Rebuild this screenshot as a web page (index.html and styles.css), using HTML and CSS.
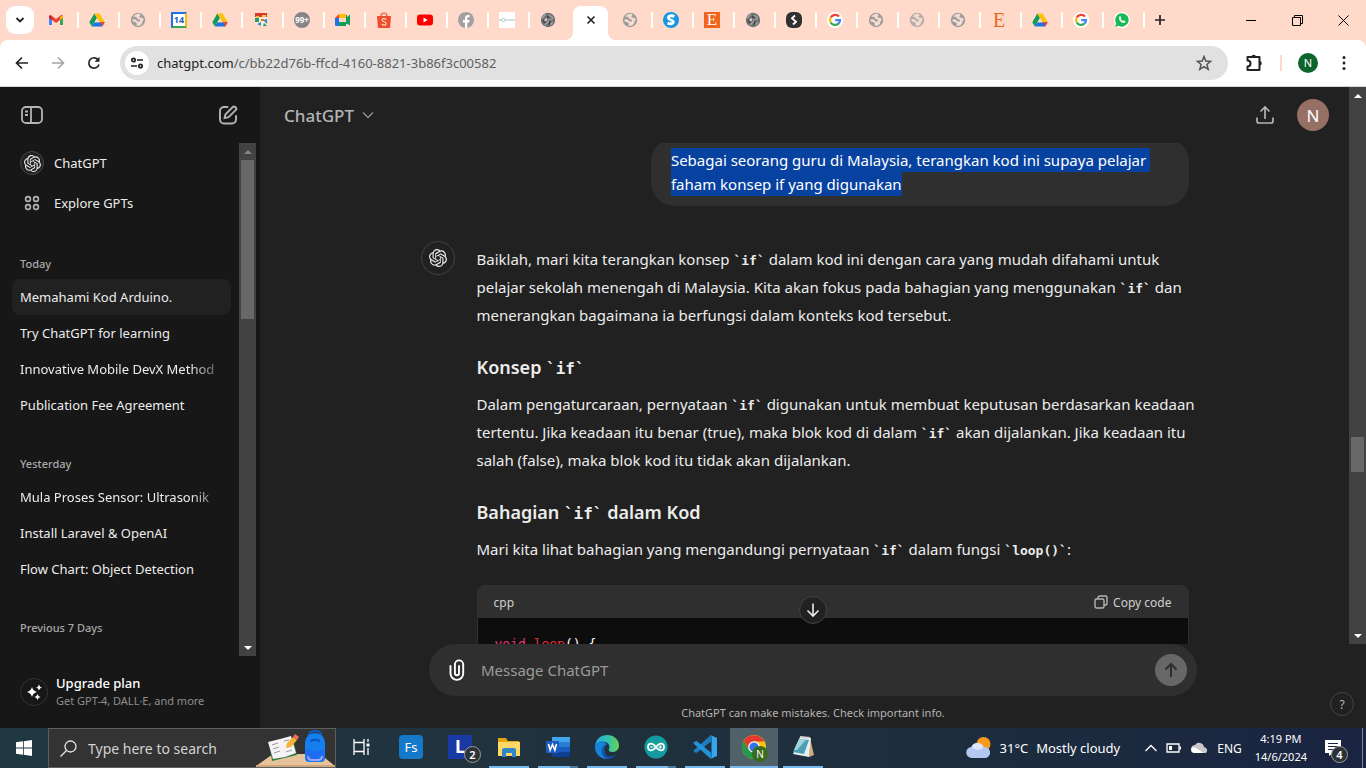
FILE: index.html
```html
<!DOCTYPE html>
<html lang="ms">
<head>
<meta charset="utf-8">
<title>Memahami Kod Arduino.</title>
<link rel="stylesheet" href="styles.css">
</head>
<body>
<svg class="defs" aria-hidden="true">
  <symbol id="drive" viewBox="0 0 16 16"><path fill="#0f9d58" d="M5.3 1.5 8 6 2.8 14.5.3 10.3z"/><path fill="#ffc107" d="M5.3 1.5h5.2l5.2 8.8h-5z"/><path fill="#1a73e8" d="M5.5 10.3h10.2l-2.5 4.2H2.8z"/><path fill="#ea4335" d="M10.7 10.3h5l-2.5 4.2z"/><path fill="#ffd9c9" d="m8 6.3 2.5 4H5.6z"/></symbol>
  <symbol id="globe" viewBox="0 0 16 16"><circle cx="8" cy="8" r="7.2" fill="#a09c9b"/><path fill="#f4dcd2" d="M9 1.500C6 1.800 4 3.500 3.500 5c2-.5 3 0 3.500 1.200S9.500 7 10 8.200c.3 1-.7 1.600-1.700 1.400C6.500 9.500 7 8 5.500 7.500 4 7 3 7.500 2 8c1 2.500 3.500 1.500 4.500 3 .6 1-.3 2 .5 3 3 0 5-1.500 5.300-3.700.2-1.800 1.500-1.500 1.200-3.300-.3-1.300-1.500-1.200-2.700-1.200-1.600 0-1.800-1.300-.8-1.800.9-.5.4-1.500-1-2.500z"/></symbol>
  <symbol id="google" viewBox="0 0 16 16"><circle cx="8" cy="8" r="8" fill="#fff"/><g fill="none" stroke-width="2.300"><path stroke="#ea4335" d="M12 4.600A5 5 0 0 0 3.700 5.500"/><path stroke="#fbbc05" d="M3.700 5.500a5 5 0 0 0 0 5"/><path stroke="#34a853" d="M3.700 10.500a5 5 0 0 0 7.600 1.200"/><path stroke="#4285f4" d="M11.300 11.700A5 5 0 0 0 13 8.200H8.200"/></g></symbol>
  <symbol id="photo" viewBox="0 0 16 16"><circle cx="8" cy="8" r="7.200" fill="#707174"/><path d="M2 6l4-4M4 9l3-3M9 3l4 3M8 8l5-1M5 13l4-4M10 13l3-3" stroke="#a5a5a5" stroke-width="1.200"/><path d="M3 8l2 3M7 4l2 2M10 9l-1 4" stroke="#3c3c3c" stroke-width="1.300"/><circle cx="6" cy="8" r="1" fill="#e2e2e2"/></symbol>
  <symbol id="openai" viewBox="0 0 24 24"><path fill="currentColor" d="M22.2819 9.8211a5.9847 5.9847 0 0 0-.5157-4.9108 6.0462 6.0462 0 0 0-6.5098-2.9A6.0651 6.0651 0 0 0 4.9807 4.1818a5.9847 5.9847 0 0 0-3.9977 2.9 6.0462 6.0462 0 0 0 .7427 7.0966 5.98 5.98 0 0 0 .511 4.9107 6.051 6.051 0 0 0 6.5146 2.9001A5.9847 5.9847 0 0 0 13.2599 24a6.0557 6.0557 0 0 0 5.7718-4.2058 5.9894 5.9894 0 0 0 3.9977-2.9001 6.0557 6.0557 0 0 0-.7475-7.0729zm-9.022 12.6081a4.4755 4.4755 0 0 1-2.8764-1.0408l.1419-.0804 4.7783-2.7582a.7948.7948 0 0 0 .3927-.6813v-6.7369l2.02 1.1686a.071.071 0 0 1 .038.052v5.5826a4.504 4.504 0 0 1-4.4945 4.4944zm-9.6607-4.1254a4.4708 4.4708 0 0 1-.5346-3.0137l.142.0852 4.783 2.7582a.7712.7712 0 0 0 .7806 0l5.8428-3.3685v2.3324a.0804.0804 0 0 1-.0332.0615L9.74 19.9502a4.4992 4.4992 0 0 1-6.1408-1.6464zM2.3408 7.8956a4.485 4.485 0 0 1 2.3655-1.9728V11.6a.7664.7664 0 0 0 .3879.6765l5.8144 3.3543-2.0201 1.1685a.0757.0757 0 0 1-.071 0l-4.8303-2.7865A4.504 4.504 0 0 1 2.3408 7.872zm16.5963 3.8558L13.1038 8.364 15.1192 7.2a.0757.0757 0 0 1 .071 0l4.8303 2.7913a4.4944 4.4944 0 0 1-.6765 8.1042v-5.6772a.79.79 0 0 0-.407-.667zm2.0107-3.0231l-.142-.0852-4.7735-2.7818a.7759.7759 0 0 0-.7854 0L9.409 9.2297V6.8974a.0662.0662 0 0 1 .0284-.0615l4.8303-2.7866a4.4992 4.4992 0 0 1 6.6802 4.66zM8.3065 12.863l-2.02-1.1638a.0804.0804 0 0 1-.038-.0567V6.0742a4.4992 4.4992 0 0 1 7.3757-3.4537l-.142.0805L8.704 5.459a.7948.7948 0 0 0-.3927.6813zm1.0976-2.3654l2.602-1.4998 2.6069 1.4998v2.9994l-2.5974 1.4997-2.6067-1.4997Z"/></symbol>
</svg>

<div class="chrome">
<div class="tabstrip">
  <button class="tab-search" aria-label="Search tabs"><svg width="10" height="10" viewBox="0 0 10 10"><path d="M1.500 3 5 6.500 8.500 3" fill="none" stroke="#222" stroke-width="1.800"/></svg></button>
  <nav class="tabs" aria-label="Tabs">
    <button class="tab" aria-label="Gmail"><svg class="fav" viewBox="0 0 16 16"><path fill="#4285f4" d="M1 4v9h3V6z"/><path fill="#34a853" d="M12 6v7h3V4z"/><path fill="#ea4335" d="m1 4 1.500-1.300L8 7l5.500-4.300L15 4v1.800L8 11 1 5.800z"/><path fill="#c5221f" d="M1 3.500 4 5v3L1 5.800z"/><path fill="#fbbc04" d="m15 3.500-3 1.500v3l3-2.200z"/></svg></button>
    <button class="tab" aria-label="Drive"><svg class="fav"><use href="#drive"/></svg></button>
    <button class="tab" aria-label="Web page"><svg class="fav"><use href="#globe"/></svg></button>
    <button class="tab" aria-label="Calendar"><span class="fav cal">14</span></button>
    <button class="tab" aria-label="Drive"><svg class="fav"><use href="#drive"/></svg></button>
    <button class="tab" aria-label="School"><svg class="fav" viewBox="0 0 16 16"><path fill="#f3efe0" d="M2 1h12v10l-6 4-6-4z"/><path fill="#d93a2b" d="M2 1h12v4H2z"/><path fill="#f6c445" d="M3 4h3v2H3zM9 3h4v2H9z"/><path fill="#2b9a62" d="M2 6h4v4H2zM11 11l3 3h-4z"/><path fill="#3a86c8" d="m10 8 4 4V7zM4 12l4-2v4z"/><path fill="#e2711d" d="M8 7h3v2H8z"/></svg></button>
    <button class="tab" aria-label="Notifications"><span class="fav count">99+</span></button>
    <button class="tab" aria-label="Meet"><svg class="fav" viewBox="0 0 16 16"><path fill="#fbbc04" d="M4 2h7v4H4z"/><path fill="#ea4335" d="M4 2v4H0z"/><path fill="#1a73e8" d="M0 6h4v8H1.500Q0 14 0 12.500z"/><path fill="#0f9d58" d="M4 10h7V6l4-3.500v11L11 11v3H4z"/><path fill="#0f9d58" d="M11 3h1v9h-1z"/></svg></button>
    <button class="tab" aria-label="Shopee"><svg class="fav" viewBox="0 0 16 16"><path fill="#ee4d2d" d="M1 4h14l-1 12H2z"/><path d="M5 4c0-4 6-4 6 0" fill="none" stroke="#ee4d2d" stroke-width="1.200"/><path d="M10.300 7.500C8.500 6 5.800 6.500 6 8.300c.2 1.700 4.300 1.300 4.200 3.300-.1 1.800-3 2-4.500.6" fill="none" stroke="#ffd9c9" stroke-width="1.200"/></svg></button>
    <button class="tab" aria-label="YouTube"><svg class="fav" viewBox="0 0 16 16"><rect y="2.500" width="16" height="11" rx="3" fill="#f00"/><path d="m6.500 5.500 4.200 2.500-4.200 2.500z" fill="#fff"/></svg></button>
    <button class="tab" aria-label="Facebook"><svg class="fav" viewBox="0 0 16 16"><circle cx="8" cy="8" r="8" fill="#a3a09f"/><path d="M7 16v-5.500H5V8h2V6.300C7 4 8.300 3 10 3h1.600v2.200h-1c-1 0-1.300.5-1.300 1.300V8h2.200l-.4 2.500H9.300V16z" fill="#fff"/></svg></button>
    <button class="tab" aria-label="Diagram"><svg class="fav" viewBox="0 0 16 16"><path fill="#fff" d="M0 0h16v16H0z"/><path d="M0 8h3m3 0h10" stroke="#b9bcbf"/><circle cx="4.500" cy="8" r="1.700" fill="none" stroke="#a9ccd8"/></svg></button>
    <button class="tab plain" aria-label="Photo"><svg class="fav"><use href="#photo"/></svg></button>
    <button class="tab active" aria-label="Close tab Memahami Kod Arduino."><svg width="10" height="10" viewBox="0 0 10 10"><path d="m1.500 1.500 7 7m0-7-7 7" stroke="#222" stroke-width="1.600"/></svg></button>
    <button class="tab" aria-label="Web page"><svg class="fav"><use href="#globe"/></svg></button>
    <button class="tab" aria-label="Shazam"><svg class="fav" viewBox="0 0 16 16"><circle cx="8" cy="8" r="8" fill="#1597e5"/><path d="M11.500 4.500C8.500 3 5 4 5.500 6.200c.4 1.900 4.600 1.700 4.800 3.500.2 2-2.800 2.700-5.800 1.400" fill="none" stroke="#fff" stroke-width="2.800"/></svg></button>
    <button class="tab" aria-label="Etsy"><span class="fav etsy">E</span></button>
    <button class="tab" aria-label="Photo"><svg class="fav"><use href="#photo"/></svg></button>
    <button class="tab" aria-label="Code"><svg class="fav" viewBox="0 0 16 16"><rect width="16" height="16" rx="6" fill="#303030"/><path d="M9 3.500 6 6.300l4 3.400-3 2.800" fill="none" stroke="#fff" stroke-width="1.800"/></svg></button>
    <button class="tab" aria-label="Google"><svg class="fav"><use href="#google"/></svg></button>
    <button class="tab" aria-label="Web page"><svg class="fav"><use href="#globe"/></svg></button>
    <button class="tab" aria-label="Web page"><svg class="fav faded"><use href="#globe"/></svg></button>
    <button class="tab" aria-label="Web page"><svg class="fav"><use href="#globe"/></svg></button>
    <button class="tab" aria-label="Etsy"><span class="fav etsy light">E</span></button>
    <button class="tab" aria-label="Drive"><svg class="fav"><use href="#drive"/></svg></button>
    <button class="tab" aria-label="Google"><svg class="fav"><use href="#google"/></svg></button>
    <button class="tab" aria-label="WhatsApp"><svg class="fav" viewBox="0 0 16 16"><circle cx="8" cy="8" r="8" fill="#fff"/><path fill="#19b955" d="M8 1.200A6.700 6.700 0 1 1 4.600 13.700L1.300 14.700l1-3.200A6.700 6.700 0 0 1 8 1.200z"/><path fill="#fff" d="m5.300 4.500 1.200-.2.900 1.900-.7.900c.5 1 1.200 1.600 2.200 2l.8-.8 1.800.9c0 1.500-1.500 2-2.500 1.700C6.500 10.200 4 7.300 5.300 4.500z"/></svg></button>
  </nav>
  <button class="new-tab" aria-label="New tab"><svg width="12" height="12" viewBox="0 0 12 12"><path d="M6 1v10M1 6h10" stroke="#222" stroke-width="1.700"/></svg></button>
  <div class="win-controls">
    <button aria-label="Minimise"><svg width="10" height="10"><path d="M0 5.500h10" stroke="#000"/></svg></button>
    <button aria-label="Restore"><svg width="11" height="11" viewBox="0 0 11 11"><path d="M.5 2.500h8v8h-8zM2.500 2.500v-2h8v8h-2" fill="none" stroke="#000"/></svg></button>
    <button aria-label="Close"><svg width="11" height="11" viewBox="0 0 11 11"><path d="m.5.5 10 10m0-10-10 10" stroke="#000"/></svg></button>
  </div>
</div>

<div class="toolbar">
  <button class="tool" aria-label="Back"><svg width="14" height="14" viewBox="0 0 14 14"><path d="M13 7H2m5-5.500L1.500 7 7 12.500" fill="none" stroke="#222" stroke-width="1.700"/></svg></button>
  <button class="tool" aria-label="Forward"><svg width="14" height="14" viewBox="0 0 14 14"><path d="M1 7h11M7 1.500 12.500 7 7 12.500" fill="none" stroke="#a3a3a3" stroke-width="1.500"/></svg></button>
  <button class="tool" aria-label="Reload"><svg width="14" height="14" viewBox="0 0 14 14"><path d="M12 8.500A5.200 5.200 0 1 1 11.300 4" fill="none" stroke="#222" stroke-width="1.700"/><path d="M12.500.8v5H7.500z" fill="#222"/></svg></button>
  <div class="omnibox">
    <button class="site-info" aria-label="Site information"><svg width="14" height="12" viewBox="0 0 14 12"><g fill="none" stroke="#222" stroke-width="1.700"><circle cx="3.500" cy="3" r="1.700"/><path d="M7 3h6M1 9h6"/><circle cx="10.500" cy="9" r="1.700"/></g></svg></button>
    <a class="url" href="#">chatgpt.com<span>/c/bb22d76b-ffcd-4160-8821-3b86f3c00582</span></a>
    <button class="star" aria-label="Bookmark"><svg width="16" height="16" viewBox="0 0 16 16"><path d="m8 1.500 1.800 4.600 4.900.3-3.800 3.100 1.300 4.800L8 11.600l-4.200 2.700 1.300-4.800-3.800-3.100 4.900-.3z" fill="none" stroke="#555" stroke-width="1.500"/></svg></button>
  </div>
  <button class="tool ext" aria-label="Extensions"><svg width="18" height="18" viewBox="0 0 18 18"><path d="M2.500 6.500V3h12v13h-12v-3.500a2.800 2.800 0 0 0 0-6z" fill="none" stroke="#222" stroke-width="2" stroke-linejoin="round"/><path d="M6.500 3a2.200 2.200 0 0 1 4.400 0zM14.500 7a2.200 2.200 0 0 1 0 4.500z" fill="#222"/></svg></button>
  <span class="tool-sep"></span>
  <button class="tool" aria-label="Profile"><span class="profile">N</span></button>
  <button class="tool" aria-label="Menu"><svg width="4" height="16" viewBox="0 0 4 16"><g fill="#222"><circle cx="2" cy="2.500" r="1.500"/><circle cx="2" cy="8" r="1.500"/><circle cx="2" cy="13.500" r="1.500"/></g></svg></button>
</div>
</div>

<div class="app">
  <aside class="sidebar">
    <header class="side-head">
      <button aria-label="Close sidebar"><svg width="22" height="18" viewBox="0 0 22 18"><g fill="none" stroke="#b4b4b4" stroke-width="1.800"><rect x="1" y="1" width="20" height="16" rx="4"/><path d="M10 1v16M4 5.500h3M4 9h3"/></g></svg></button>
      <button aria-label="New chat"><svg width="20" height="20" viewBox="0 0 20 20"><g fill="none" stroke="#b4b4b4" stroke-width="1.900"><path d="M9.500 2H6a4 4 0 0 0-4 4v8.500a4 4 0 0 0 4 4h8a4 4 0 0 0 4-4V11" stroke-linecap="round"/><path d="m7.500 9.300 7.300-7.300c1.600-1.500 4.600 1 3 2.900l-7.200 7.300-4 .9z"/></g></svg></button>
    </header>
    <div class="side-body">
      <nav class="side-list">
        <a class="gpt" href="#"><span class="gpt-icon ring"><svg width="17" height="17"><use href="#openai"/></svg></span>ChatGPT</a>
        <a class="gpt" href="#"><span class="gpt-icon"><svg width="16" height="16" viewBox="0 0 16 16"><g fill="none" stroke="#b4b4b4" stroke-width="1.600"><circle cx="4" cy="4" r="2.400"/><circle cx="12" cy="4" r="2.400"/><circle cx="4" cy="12" r="2.400"/><circle cx="12" cy="12" r="2.400"/></g></svg></span>Explore GPTs</a>
        <h3>Today</h3>
        <a class="chat current" href="#">Memahami Kod Arduino.</a>
        <a class="chat" href="#">Try ChatGPT for learning</a>
        <a class="chat fade" href="#">Innovative Mobile DevX Method</a>
        <a class="chat" href="#">Publication Fee Agreement</a>
        <h3>Yesterday</h3>
        <a class="chat fade" href="#">Mula Proses Sensor: Ultrasonik</a>
        <a class="chat" href="#">Install Laravel &amp; OpenAI</a>
        <a class="chat" href="#">Flow Chart: Object Detection</a>
        <h3>Previous 7 Days</h3>
      </nav>
      <div class="scrollbar side-bar">
        <span class="arrow up dim"></span><span class="thumb"></span><span class="arrow down"></span>
      </div>
    </div>
    <a class="upgrade" href="#">
      <span class="spark"><svg width="18" height="18" viewBox="0 0 18 18"><g fill="#fff"><path d="M7 4q1 4 5 5-4 1-5 5-1-4-5-5 4-1 5-5z"/><path d="M14 1.500q.5 2.500 3 3-2.500.5-3 3-.5-2.500-3-3 2.500-.5 3-3zM12.500 11q.5 2.500 3 3-2.500.5-3 3-.5-2.500-3-3 2.500-.5 3-3z"/></g></svg></span>
      <span><strong>Upgrade plan</strong><small>Get GPT-4, DALL·E, and more</small></span>
    </a>
  </aside>

  <main class="main">
    <div class="pane">
      <div class="pane-main">
        <header class="main-head">
          <button class="model">ChatGPT <svg width="12" height="8" viewBox="0 0 12 8"><path d="m1 1.500 5 5 5-5" fill="none" stroke="#8f8f8f" stroke-width="1.500"/></svg></button>
          <button class="share" aria-label="Share"><svg width="20" height="20" viewBox="0 0 20 20"><path d="M2 12.500V16a2 2 0 0 0 2 2h12a2 2 0 0 0 2-2v-3.500M10 14V2M5.500 6.500 10 2l4.500 4.500" fill="none" stroke="#b4b4b4" stroke-width="1.700"/></svg></button>
          <button class="user" aria-label="Account">N</button>
        </header>
        <div class="thread">
          <div class="thread-col">
            <div class="bubble"><mark>Sebagai seorang guru di Malaysia, terangkan kod ini supaya pelajar&nbsp;<br>faham konsep if yang digunakan</mark></div>
            <article class="reply">
              <span class="bot"><svg width="18" height="18"><use href="#openai"/></svg></span>
              <div class="prose">
                <p>Baiklah, mari kita terangkan konsep <code>`if`</code> dalam kod ini dengan cara yang mudah difahami untuk<br>pelajar sekolah menengah di Malaysia. Kita akan fokus pada bahagian yang menggunakan <code>`if`</code> dan<br>menerangkan bagaimana ia berfungsi dalam konteks kod tersebut.</p>
                <h2>Konsep <code>`if`</code></h2>
                <p>Dalam pengaturcaraan, pernyataan <code>`if`</code> digunakan untuk membuat keputusan berdasarkan keadaan<br>tertentu. Jika keadaan itu benar (true), maka blok kod di dalam <code>`if`</code> akan dijalankan. Jika keadaan itu<br>salah (false), maka blok kod itu tidak akan dijalankan.</p>
                <h2>Bahagian <code>`if`</code> dalam Kod</h2>
                <p>Mari kita lihat bahagian yang mengandungi pernyataan <code>`if`</code> dalam fungsi <code>`loop()`</code>:</p>
                <div class="codeblock">
                  <div class="code-head"><span>cpp</span><button><svg width="14" height="14" viewBox="0 0 14 14"><g fill="none" stroke="#b4b4b4" stroke-width="1.400"><rect x="1" y="4" width="9" height="9" rx="1.500"/><path d="M4 4V2.500A1.500 1.500 0 0 1 5.500 1h6A1.500 1.500 0 0 1 13 2.500v6a1.500 1.500 0 0 1-1.500 1.500H10"/></g></svg>Copy code</button></div>
                  <pre><span class="kw">void</span> <span class="fn">loop</span>() {</pre>
                </div>
              </div>
            </article>
          </div>
        </div>
      </div>
      <div class="scrollbar main-bar">
        <span class="arrow up"></span><span class="thumb"></span><span class="arrow down"></span>
      </div>
      <button class="jump" aria-label="Scroll to bottom"><svg width="14" height="16" viewBox="0 0 14 16"><path d="M7 1.500v12M1.500 8.500 7 14l5.500-5.500" fill="none" stroke="#ececec" stroke-width="1.600"/></svg></button>
    </div>
    <footer class="foot">
      <form class="composer">
        <button type="button" class="clip" aria-label="Attach"><svg width="16" height="22" viewBox="0 0 16 22"><path d="M1.500 7v7.500a6.200 6.200 0 0 0 12.700 0V5.500a4 4 0 0 0-8.300 0v8.700a2 2 0 0 0 4.100 0V7" fill="none" stroke="#fff" stroke-width="1.900" stroke-linecap="round"/></svg></button>
        <input type="text" placeholder="Message ChatGPT" aria-label="Message ChatGPT">
        <button type="button" class="send" aria-label="Send"><svg width="14" height="16" viewBox="0 0 14 16"><path d="M7 15V2M1.500 7.500 7 2l5.500 5.500" fill="none" stroke="#2f2f2f" stroke-width="2"/></svg></button>
      </form>
      <p class="note">ChatGPT can make mistakes. Check important info.</p>
      <button class="help" aria-label="Help">?</button>
    </footer>
  </main>
</div>

<div class="taskbar">
  <button class="start" aria-label="Start"><svg width="16" height="16" viewBox="0 0 16 16"><path fill="#fff" d="M0 2.300 7 1.300V7.600H0zM7.800 1.200 16 0v7.600H7.800zM0 8.400h7v6.300l-7-1zM7.800 8.400H16V16l-8.200-1.200z"/></svg></button>
  <label class="search">
    <svg width="17" height="17" viewBox="0 0 17 17"><g fill="none" stroke="#e6e6e6" stroke-width="1.300"><circle cx="10.500" cy="6.500" r="5.500"/><path d="M6.500 10.500.5 16.500"/></g></svg>
    <input type="text" placeholder="Type here to search" aria-label="Type here to search">
    <svg class="school" width="79" height="38" viewBox="0 0 79 38"><path fill="#e6c39a" d="M0 37 17 25h47l15 12z"/><path fill="#d0a577" d="M0 36h79v2H0z"/><path fill="#2f7d46" d="m13 14 24-5 4 17-25 6z"/><path fill="#f5f3f5" d="m12 13 12-3 5 18-12 2zM24 10l11-3 5 17-11 4z"/><path d="m16 16 6-2m-5 6 6-2m-5 6 6-2m4-10 5-1m-3 12 6-2" stroke="#9a9a9a"/><path d="m30 19 1-5 6-6 4 3-6 7z" fill="#f6b236"/><path d="m37 8 2-3 4 3-2 3z" fill="#f06f5c"/><path d="M53 6q0-4 6-4t6 4" fill="none" stroke="#0c5cc7" stroke-width="2"/><path d="M49 29V14q1-10 10-10t10 10v15q0 4-4 4H53q-4 0-4-4z" fill="#157ff0"/><path d="M54 11q5-3 10 0v2q-5-2-10 0z" fill="#0857bd"/><path d="M50 20q9 4 18 0v8q0 4-4 4H54q-4 0-4-4z" fill="#1c6df0"/><path d="M52 27q0 4 4 4h6q4 0 4-4" stroke="#a5a2ff" stroke-width="2" fill="none"/></svg>
  </label>
  <nav class="apps" aria-label="Taskbar">
    <button class="view" aria-label="Task view"><svg width="17" height="16" viewBox="0 0 17 16"><path d="M1 0v3.500h10V0M1 16v-3.500h10V16M1 3.500v9M11 3.500v9M15 0v3m0 6v7" fill="none" stroke="#fff" stroke-width="1.300"/><path fill="#fff" d="M13.500 4.500h3v3h-3z"/></svg></button>
    <button aria-label="Fs"><span class="sq fs">Fs</span></button>
    <button aria-label="L"><span class="sq el">L<span class="badge">2</span></span></button>
    <button class="open" aria-label="Explorer"><svg width="24" height="24" viewBox="0 0 24 24"><path fill="#e8a317" d="M1 3h8l2 3h11v4H1z"/><path fill="#ffd868" d="M1 7h22v14H1z"/><path fill="#2f87c8" d="M5 22v-7q0-2 2-2h10q2 0 2 2v7h-4v-4H9v4z"/></svg></button>
    <button class="open multi" aria-label="Word"><svg width="24" height="24" viewBox="0 0 24 24"><path fill="#41a5ee" d="M6 2h18v6H6z"/><path fill="#2b7cd3" d="M6 7h18v5H6z"/><path fill="#185abd" d="M6 12h18v5H6z"/><path fill="#103f91" d="M6 17h18v5H6z"/><path fill="#1a5dbe" d="M0 6h13v12H0z"/><path d="m2.500 9 1.700 6L6.500 9.500 8.800 15 10.500 9" fill="none" stroke="#fff" stroke-width="1.600"/></svg></button>
    <button class="open" aria-label="Edge"><svg width="24" height="24" viewBox="0 0 24 24"><defs><linearGradient id="ea" x1="0" x2="1"><stop offset="0" stop-color="#27a8e0"/><stop offset=".6" stop-color="#35c4a5"/><stop offset="1" stop-color="#70d34c"/></linearGradient></defs><path fill="#0c62b8" d="M.2 10C1 5 5 4 9 6l3 3c-5 4-3 11 3 14C7 26-1 19 .2 10z"/><path fill="url(#ea)" d="M.2 10.500C1 4 6 0 12 0c7 0 12 5 12 10.500 0 4-3 6.500-6.500 6.500-3 0-4.500-1.500-3.500-3 2-5-3-8-7-7.500C4 7 1 8 .2 10.500z"/><path fill="#1583d8" d="M.2 10.500C2 7 9 6 12 9.500c-4 0-6 3-5 7 1 4 4 6.500 7 7.300C6 25-1 18 .2 10.500z"/><path fill="#134c9e" d="M8 13c-1.500 6 4 11 13.500 6.500C19 23 15 25 11 23.500 7 21 5.500 16 8 13z"/></svg></button>
    <button class="open multi" aria-label="Arduino"><svg width="24" height="24" viewBox="0 0 24 24"><circle cx="12" cy="12" r="11.500" fill="#129a9e"/><g fill="none" stroke="#fff" stroke-width="1.800"><path d="M12 12C8 6.500 4 8.500 4 12s4 5.500 8 0 8-3.500 8 0-4 5.500-8 0z"/><path d="M6 12h3.500m5 0H18M16.200 10.300v3.500" stroke-width="1.200"/></g></svg></button>
    <button class="open" aria-label="VS Code"><svg width="24" height="24" viewBox="0 0 24 24"><path fill="#1a7ec2" d="M18 0v6.500L3.500 18 1 17q-1-1 0-2z"/><path fill="#2392d8" d="M18 24v-6.500L3.500 6 1 7q-1 1 0 2z"/><path fill="#35a5ee" d="m17.500 0 6.500 3v18l-6.500 3q1-.5 1-2V2q0-1.500-1-2z"/></svg></button>
    <button class="open selected" aria-label="Chrome"><svg width="24" height="24" viewBox="0 0 24 24"><circle cx="12" cy="12" r="12" fill="#fbc116"/><path fill="#e33b2e" d="M1.600 6A12 12 0 0 1 22.400 6.500H12L7 15z"/><path fill="#26984b" d="M1.600 6A12 12 0 0 0 12 24l5-9-5 2-5-2z"/><circle cx="12" cy="12" r="5.800" fill="#fff"/><circle cx="12" cy="12" r="4.600" fill="#2f76e6"/></svg><span class="chrome-user">N</span></button>
    <button class="open" aria-label="Notepad"><svg width="24" height="24" viewBox="0 0 24 24"><path fill="#cfae78" d="m19 3 4 17-5 2z"/><path fill="#e7eef0" d="m9 2 11 1-2 19-16-3z"/><path fill="#4c9fb3" d="m8 4 10 1-5 14-11-2z"/><path fill="#9fd3de" d="m8 4 7 .700L6 15l-3 0z"/><path d="m9 2 10 1" stroke="#d5d5d5" stroke-width="2"/></svg></button>
  </nav>
  <div class="tray">
    <button class="weather"><svg width="26" height="24" viewBox="0 0 26 24"><circle cx="17.500" cy="8" r="7" fill="#f79a1c"/><path fill="#b4c8f2" d="M6 22a5.500 5.500 0 0 1-.5-11A6.500 6.500 0 0 1 17.500 11a5 5 0 0 1 2 11z"/><path fill="#dde7fb" d="M5.500 11A6.500 6.500 0 0 1 17.500 11c-1 3-8 4-12 0z"/></svg><span>31°C</span><span>Mostly cloudy</span></button>
    <button aria-label="Hidden icons"><svg width="12" height="8" viewBox="0 0 12 8"><path d="m.5 7 5.500-5.500L11.500 7" fill="none" stroke="#fff" stroke-width="1.300"/></svg></button>
    <button aria-label="Battery"><svg width="15" height="10" viewBox="0 0 15 10"><path d="M1 1h12v8H1z" fill="none" stroke="#fff" stroke-width="1.300"/><path fill="#fff" d="M3 3h3v4H3zM13.500 3.500H15v3h-1.500z"/></svg></button>
    <button aria-label="OneDrive"><svg width="18" height="12" viewBox="0 0 18 12"><path fill="#c9c9c9" d="M1 6a4.500 4.500 0 0 1 4-3 5 5 0 0 1 9 2 3.500 3.500 0 0 1 2 6H4A4 4 0 0 1 1 6z"/><path fill="#fff" d="M2 10c-2-3 1-6 4-4l7 4.500-1 .5H4z"/></svg></button>
    <button class="lang">ENG</button>
    <button class="clock"><span>4:19 PM</span><span>14/6/2024</span></button>
    <button class="notices" aria-label="4 notifications"><svg width="16" height="16" viewBox="0 0 16 16"><path fill="#fff" d="M0 0h16v13H8l-4 3v-3H0z"/><path d="M3 3.500h10M3 6.500h10M3 9.500h6" stroke="#1b2742" stroke-width="1.200"/></svg><span class="badge">4</span></button>
  </div>
</div>
</body>
</html>
```
FILE: styles.css
```css
* { box-sizing: border-box; }
html { height: 100%; }
body {
  margin: 0;
  height: 100%;
  display: flex;
  flex-direction: column;
  overflow: hidden;
  background: #212121;
  color: #ececec;
  font-family: "Noto Sans", "Open Sans", sans-serif;
  font-size: 15px;
}
button {
  margin: 0;
  padding: 0;
  border: 0;
  background: none;
  color: inherit;
  font: inherit;
  display: flex;
  align-items: center;
  justify-content: center;
  flex: none;
}
a { color: inherit; text-decoration: none; }
svg { display: block; flex: none; }
input { font: inherit; color: inherit; background: none; border: 0; outline: 0; padding: 0; min-width: 0; }
.defs { position: absolute; width: 0; height: 0; }

/* Browser tabs */
.chrome { flex: none; background: #ffd9c9; }
.tabstrip { height: 40px; display: flex; align-items: center; }
.tab-search { width: 28px; height: 28px; margin: 0 4px 0 6px; border-radius: 9px; background: #fff; }
.tabs { display: flex; height: 40px; align-items: center; }
.tab { width: 41px; height: 16px; padding-left: 10px; justify-content: flex-start; border-right: 2px solid #fff; }
.tab.plain { border-color: transparent; }
.tab.active {
  position: relative;
  width: 35px;
  height: 34px;
  margin: 0 4px 0 2px;
  padding: 0 0 6px;
  align-self: flex-end;
  justify-content: center;
  border: 0;
  border-radius: 8px 8px 0 0;
  background: #fff;
}
.tab.active::before, .tab.active::after {
  content: "";
  position: absolute;
  bottom: 0;
  width: 8px;
  height: 8px;
}
.tab.active::before { right: 100%; background: radial-gradient(circle at 0 0, transparent 8px, #fff 8px); }
.tab.active::after { left: 100%; background: radial-gradient(circle at 100% 0, transparent 8px, #fff 8px); }
.fav { width: 16px; height: 16px; display: block; text-align: center; }
.faded { opacity: .75; }
.cal { border: 2px solid #1a73e8; border-right-color: #fbbc04; border-bottom-color: #34a853; background: #fff; color: #1a62c8; font-size: 9px; font-weight: 700; line-height: 12px; }
.count { border-radius: 8px; background: #858585; color: #fff; font-size: 8px; font-weight: 700; line-height: 16px; }
.etsy { background: #f1641e; color: #fff; font-family: "Liberation Serif", serif; font-size: 17px; line-height: 16px; }
.etsy.light { background: none; color: #f1641e; font-size: 20px; }
.new-tab { width: 28px; height: 28px; margin-left: 1px; }
.win-controls { display: flex; margin-left: auto; }
.win-controls button { width: 46px; height: 40px; }

/* Address bar */
.toolbar {
  height: 47px;
  display: flex;
  align-items: center;
  padding: 0 4px;
  border-bottom: 1px solid #d5d5d5;
  border-radius: 8px 8px 0 0;
  background: #fff;
}
.tool { width: 36px; height: 36px; }
.omnibox { flex: 1; height: 34px; margin: 0 8px; display: flex; align-items: center; padding: 0 16px 0 5px; border-radius: 17px; background: #e1e1e1; }
.site-info { width: 24px; height: 24px; border-radius: 12px; background: #fff; }
.url { flex: 1; margin-left: 8px; color: #222; font-size: 13px; }
.url span { color: #5f5f5f; }
.tool-sep { width: 2px; height: 16px; margin: 0 8px; background: #ffd9c9; }
.profile { width: 20px; height: 20px; border-radius: 10px; background: #0d652d; color: #fff; font-size: 11px; line-height: 20px; }

/* Application shell */
.app { flex: 1; min-height: 0; display: flex; }
.sidebar { flex: none; width: 260px; display: flex; flex-direction: column; background: #171717; }
.side-head { flex: none; height: 56px; display: flex; align-items: center; justify-content: space-between; padding: 0 22px 0 21px; }
.side-body { flex: 1; min-height: 0; display: flex; padding-right: 4px; }
.side-list { flex: 1; min-width: 0; padding: 0 8px 0 12px; overflow: hidden; font-size: 13px; }
.gpt { display: flex; align-items: center; gap: 10px; height: 40px; padding-left: 8px; }
.gpt-icon { width: 24px; height: 24px; display: flex; align-items: center; justify-content: center; border-radius: 12px; }
.gpt-icon.ring { border: 1px solid #494949; background: #212121; }
.side-list h3 { margin: 26px 0 0; padding-left: 8px; color: #a8a8a8; font-size: 11px; font-weight: 500; line-height: 30px; }
.chat { display: block; height: 36px; padding-left: 8px; border-radius: 8px; line-height: 36px; white-space: nowrap; overflow: hidden; }
.chat.current { background: #212121; }
.chat.fade { margin-right: 8px; -webkit-mask-image: linear-gradient(to right, #000 84%, transparent 103%); mask-image: linear-gradient(to right, #000 84%, transparent 103%); }
.upgrade { flex: none; height: 72px; display: flex; align-items: center; gap: 8px; padding-left: 20px; }
.upgrade strong, .upgrade small { display: block; line-height: 18px; }
.upgrade strong { color: #fff; font-size: 13px; font-weight: 500; }
.upgrade small { color: #8f8f8f; font-size: 11px; }
.spark { width: 28px; height: 28px; display: flex; align-items: center; justify-content: center; border: 1px solid #333; border-radius: 14px; }

/* Scrollbars */
.scrollbar { flex: none; width: 17px; display: flex; flex-direction: column; align-items: center; background: #424242; }
.scrollbar .thumb { width: 13px; background: #686868; }
.scrollbar .arrow { flex: none; width: 17px; height: 17px; display: flex; align-items: center; justify-content: center; }
.scrollbar .arrow::before { content: ""; border: 4px solid transparent; }
.arrow.up::before { border-top-width: 0; border-bottom-color: #fff; }
.arrow.down::before { border-bottom-width: 0; border-top-color: #fff; }
.arrow.up.dim::before { border-bottom-color: #868686; }
.arrow.down { margin-top: auto; }
.side-bar .thumb { height: 31%; }
.main-bar .thumb { height: 35px; margin-top: 333px; }

/* Conversation */
.main { flex: 1; min-width: 0; display: flex; flex-direction: column; }
.pane { position: relative; flex: 1; min-height: 0; display: flex; }
.pane-main { flex: 1; min-width: 0; display: flex; flex-direction: column; }
.main-head { flex: none; height: 56px; display: flex; align-items: center; padding: 0 20px 0 24px; }
.model { gap: 8px; color: #b4b4b4; font-size: 17px; font-weight: 500; }
.share { margin-left: auto; }
.user { width: 32px; height: 32px; margin-left: 22px; border-radius: 16px; background: #966f65; color: #fff; font-size: 17px; }
.thread { flex: 1; min-height: 0; overflow: hidden; }
.thread-col { max-width: 768px; margin: -5px auto 0; }
.bubble { width: 70%; margin-left: auto; padding: 10px 20px; border-radius: 24px; background: #2f2f2f; line-height: 24px; white-space: nowrap; }
.bubble mark { padding: 2px 0; background: #0842a0; color: #fff; }
.reply { display: flex; gap: 22px; margin-top: 35px; }
.bot { flex: none; width: 34px; height: 34px; display: flex; align-items: center; justify-content: center; border: 1px solid #424242; border-radius: 17px; }
.prose { flex: 1; min-width: 0; padding-top: 4px; white-space: nowrap; }
.prose p { margin: 0; line-height: 28px; }
.prose h2 { margin: 24px 0 9px; font-size: 18px; font-weight: 600; line-height: 28px; }
code, pre { font-family: "DejaVu Sans Mono", "Liberation Mono", monospace; }
code { font-size: 13px; font-weight: 700; line-height: 1; }
h2 code { font-size: 16px; }
.codeblock { margin-top: 22px; border: 1px solid #2f2f2f; border-radius: 6px; background: #0d0d0d; overflow: hidden; }
.code-head { display: flex; align-items: center; justify-content: space-between; height: 32px; padding: 0 16px; background: #2f2f2f; color: #cfcfcf; font-size: 12px; }
.code-head button { gap: 5px; }
.codeblock pre { margin: 0; padding: 16px 17px; font-size: 13px; line-height: 20px; color: #fff; }
.kw { color: #e9387e; }
.fn { color: #f22c3d; }
.jump { position: absolute; left: 50%; bottom: 20px; width: 28px; height: 28px; margin-left: -14px; border: 1px solid #424242; border-radius: 14px; background: #212121; }

.foot { position: relative; flex: none; padding-bottom: 6px; }
.composer { max-width: 768px; height: 52px; margin: 0 auto; display: flex; align-items: center; padding: 0 10px 0 20px; border-radius: 26px; background: #2f2f2f; }
.composer input { flex: 1; margin-left: 16px; }
.composer input::placeholder { color: #9b9b9b; opacity: 1; }
.send { width: 32px; height: 32px; border-radius: 16px; background: #676767; }
.note { margin: 8px 0 0; text-align: center; color: #b4b4b4; font-size: 11px; line-height: 18px; }
.help { position: absolute; right: 12px; bottom: 12px; width: 24px; height: 24px; border: 1px solid #454545; border-radius: 12px; color: #b4b4b4; font-size: 12px; }

/* Taskbar */
.taskbar { flex: none; height: 40px; display: flex; background: linear-gradient(90deg, #203842, #20313d 45%, #1c2c3e 75%, #1a2442); color: #fff; }
.start { width: 48px; }
.search { width: 288px; display: flex; align-items: center; gap: 11px; padding-left: 11px; border: 1px solid #5c6062; background: #333; }
.search input { flex: 1; width: 100px; font-size: 14px; }
.search input::placeholder { color: #d2d2d2; opacity: 1; }
.apps { display: flex; gap: 1px; }
.apps button { position: relative; width: 48px; border-bottom: 2px solid transparent; }
.apps .view { width: 50px; }
.apps .open::after { content: ""; position: absolute; left: 4px; right: 4px; bottom: -2px; height: 2px; background: #76b9ed; }
.apps .multi::after { background: linear-gradient(90deg, #76b9ed 32px, #4c7d9e 32px); }
.apps .selected { background: #51616a; }
.apps .selected::after { left: 0; right: 0; }
.sq { position: relative; width: 24px; height: 24px; line-height: 24px; text-align: center; }
.fs { border-radius: 4px; background: #1479c9; font-size: 13px; }
.el { background: #1939a5; font-size: 18px; font-weight: 700; line-height: 22px; }
.badge { position: absolute; left: 16px; top: 11px; width: 17px; height: 17px; border: 1px solid #9a9a9a; border-radius: 9px; background: #2c3236; color: #fff; font-size: 11px; font-weight: 600; line-height: 15px; text-align: center; }
.chrome-user { position: absolute; left: 22px; top: 18px; width: 16px; height: 16px; border-radius: 8px; background: #386a20; font-size: 10px; line-height: 16px; }
.tray { display: flex; align-items: center; margin-left: auto; padding-right: 3px; font-size: 13px; }
.tray button { height: 40px; }
.tray > button + button { margin-left: 9px; }
.weather { gap: 8px; }
.tray > .weather + button { margin-left: 25px; }
.lang { font-size: 12px; }
.clock { flex-direction: column; font-size: 11px; line-height: 18px; }
.tray > .clock.clock { margin-left: 13px; }
.tray > .notices.notices { position: relative; width: 46px; margin-left: 10px; padding-right: 14px; border-right: 1px solid #7f8794; }
.notices .badge { left: 14px; top: 18px; }
```
